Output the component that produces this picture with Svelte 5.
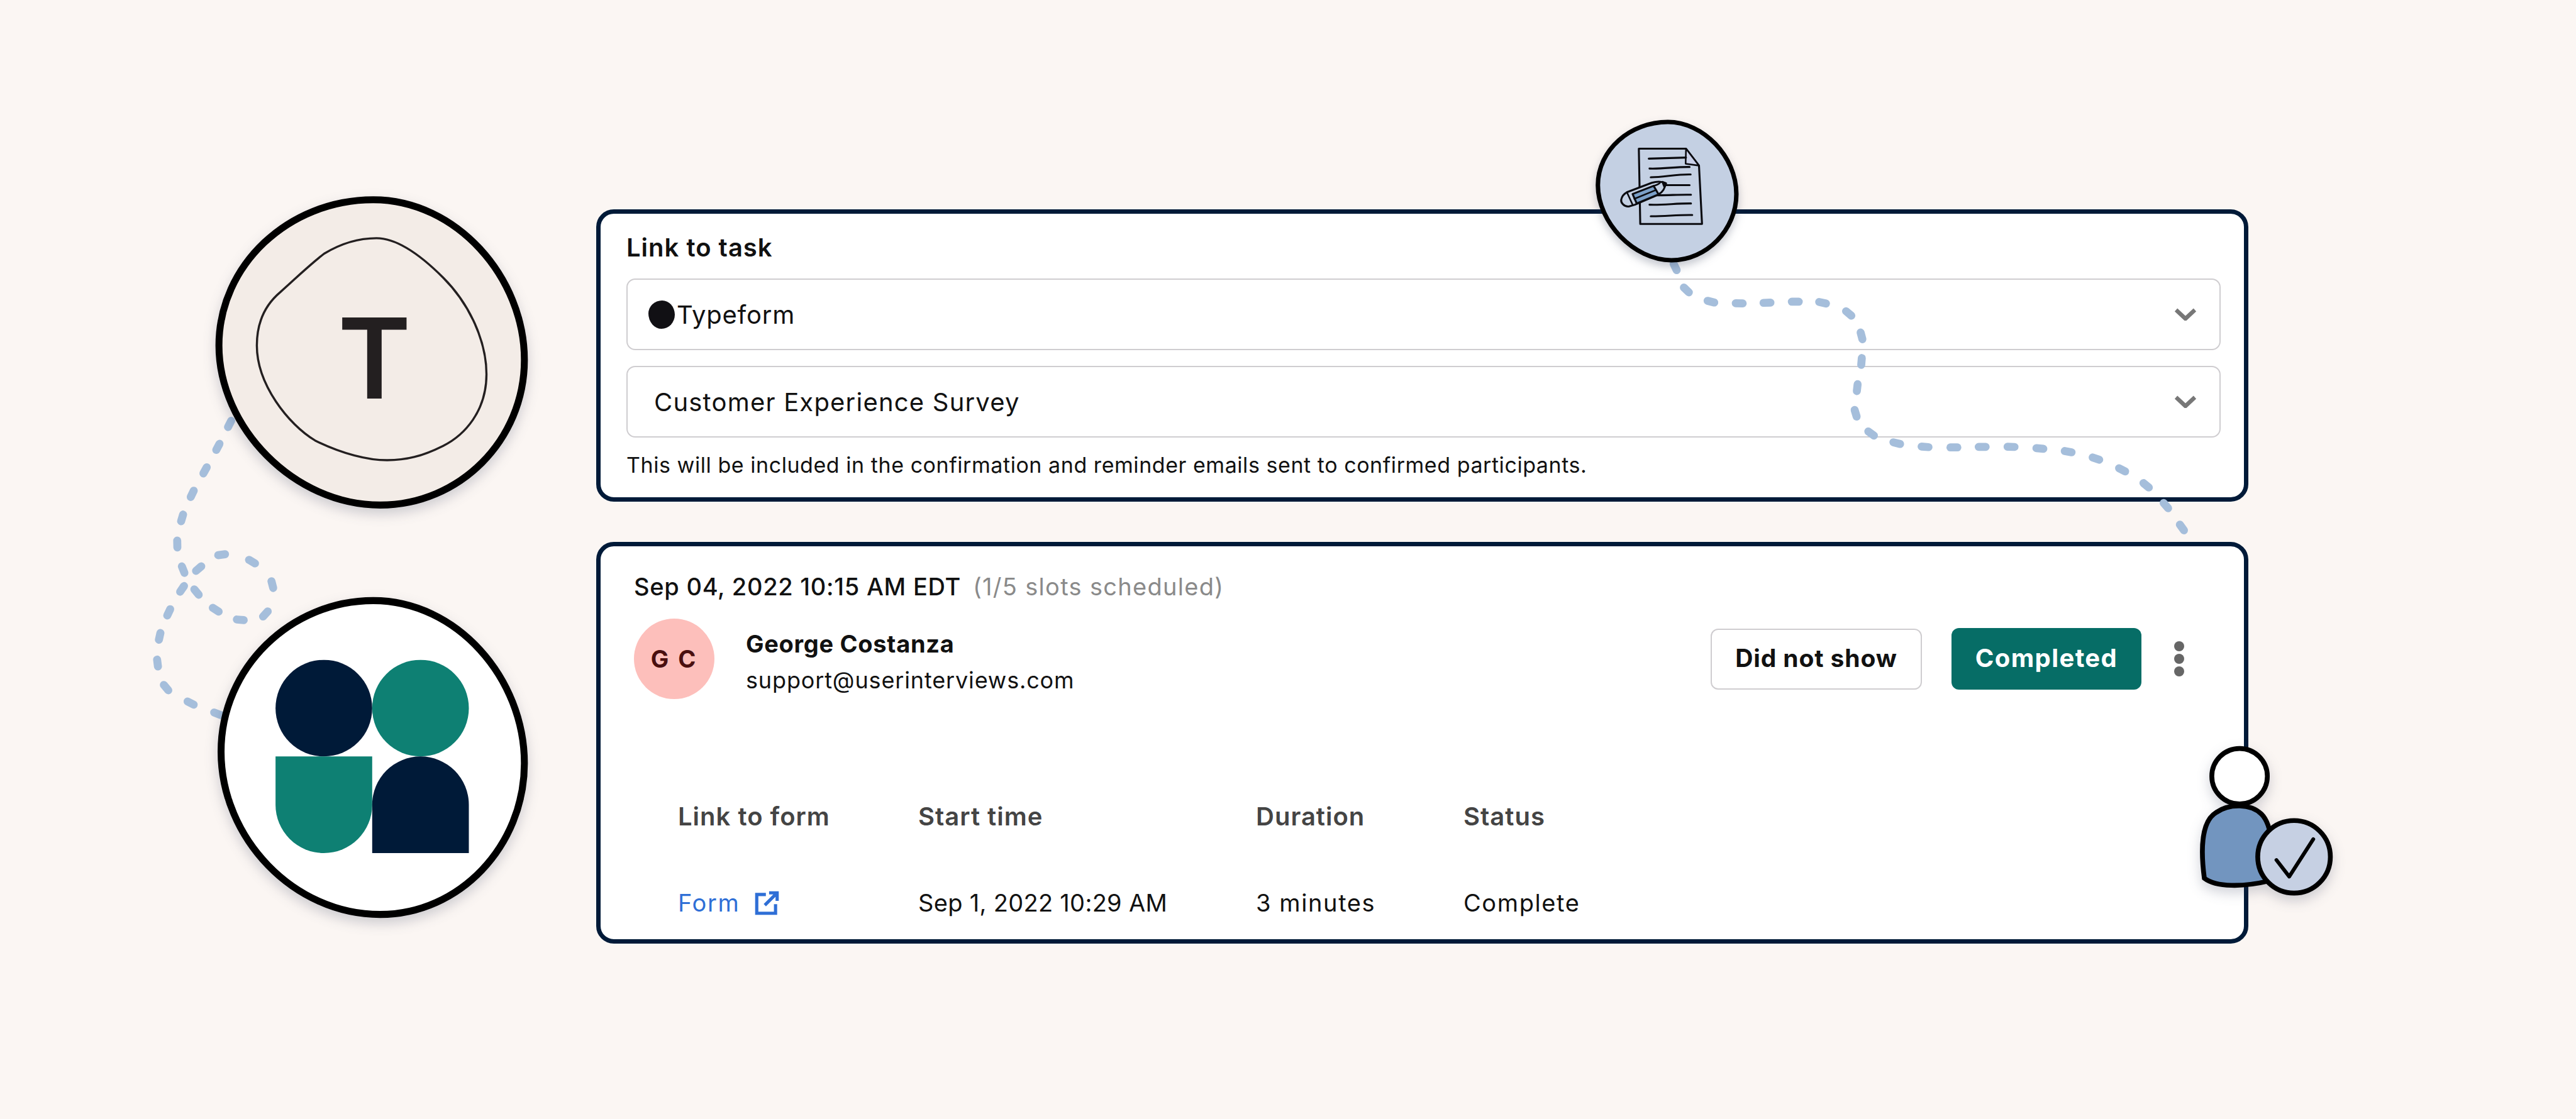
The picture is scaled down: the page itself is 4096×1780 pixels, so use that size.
<script>
  // dash centres of the dotted trails, in reference pixels
  const leftTrail = [
    [430,794],[408,837],[384,881],[360,925],[341,970],[332,1019],[343,1067],[368,1109],
    [404,1142],[450,1161],[497,1150],[510,1095],[472,1052],[415,1039],[372,1065],[341,1103],
    [316,1147],[299,1192],[295,1242],[311,1288],[357,1317],[407,1337]
  ];
  const rightTrail = [
    [3137,500],[3158,543],[3204,565],[3257,568],[3309,567],[3362,565],[3413,567],[3462,587],
    [3486,629],[3486,677],[3478,726],[3475,774],[3504,812],[3552,830],[3605,837],[3659,838],
    [3712,837],[3766,837],[3820,840],[3873,846],[3925,859],[3974,880],[4019,909],[4056,947],[4086,988]
  ];

  function toDashes(points, len = 13) {
    return points.map((p, i) => {
      const a = points[Math.max(i - 1, 0)];
      const b = points[Math.min(i + 1, points.length - 1)];
      const d = Math.hypot(b[0] - a[0], b[1] - a[1]) || 1;
      const dx = ((b[0] - a[0]) / d) * len / 2;
      const dy = ((b[1] - a[1]) / d) * len / 2;
      return { x1: p[0] - dx, y1: p[1] - dy, x2: p[0] + dx, y2: p[1] + dy };
    });
  }

  const dashes = [...toDashes(leftTrail), ...toDashes(rightTrail)];
</script>

<div class="page">
  <section class="card task">
    <div class="label">Link to task</div>
    <div class="select first">
      <span class="blob"></span>
      <span class="typeform">Typeform</span>
      <svg class="chevron" viewBox="0 0 34 20" fill="none" stroke="currentColor" stroke-width="6.5">
        <path d="M2 3 L17 17 L32 3"/>
      </svg>
    </div>
    <div class="select second">
      <span class="survey">Customer Experience Survey</span>
      <svg class="chevron" viewBox="0 0 34 20" fill="none" stroke="currentColor" stroke-width="6.5">
        <path d="M2 3 L17 17 L32 3"/>
      </svg>
    </div>
    <p class="note">This will be included in the confirmation and reminder emails sent to confirmed participants.</p>
  </section>

  <section class="card session">
    <div class="when">Sep 04, 2022 10:15 AM EDT <span class="slots">(1/5 slots scheduled)</span></div>
    <div class="person">
      <div class="avatar">G C</div>
      <div class="who">
        <div class="name">George Costanza</div>
        <div class="email">support@userinterviews.com</div>
      </div>
      <button class="btn ghost">Did not show</button>
      <button class="btn solid">Completed</button>
      <svg class="kebab" viewBox="0 0 16 56" fill="currentColor">
        <circle cx="8" cy="8" r="8"/>
        <circle cx="8" cy="28" r="8"/>
        <circle cx="8" cy="48" r="8"/>
      </svg>
    </div>
    <div class="table">
      <div class="th">Link to form</div>
      <div class="th">Start time</div>
      <div class="th">Duration</div>
      <div class="th">Status</div>
      <div class="td form">
        Form
        <svg viewBox="0 0 24 24" fill="none" stroke="currentColor" stroke-width="3">
          <path d="M11 4 H2.5 V21.5 H20 V13"/>
          <path d="M10 14 L21 3 M14 2.5 H21.5 V10"/>
        </svg>
      </div>
      <div class="td start">Sep 1, 2022 10:29 AM</div>
      <div class="td">3 minutes</div>
      <div class="td">Complete</div>
    </div>
  </section>

  <svg class="canvas" viewBox="0 0 4824 2096">
    <g class="trail">
      {#each dashes as d}
        <line x1={d.x1} y1={d.y1} x2={d.x2} y2={d.y2}/>
      {/each}
    </g>

    <!-- typeform badge -->
    <path class="soft" d="M410 647 C410 497 540 374 699 374 C855 374 982 520 982 674 C982 825 860 946 712 946 C550 946 410 800 410 647 Z" fill="#f3ece7" stroke="#000" stroke-width="13"/>
    <path d="M481 647 C481 600 500 568 525 547 C550 525 575 500 607 475 C640 455 670 446 705 446 C745 446 790 480 830 520 C880 570 911 640 911 701 C911 770 870 815 830 835 C790 855 760 862 725 862 C690 862 640 850 590 825 C540 795 481 720 481 647 Z" fill="none" stroke="#231f20" stroke-width="4"/>
    <text class="tee" x="701" y="746" text-anchor="middle">T</text>

    <!-- user interviews badge -->
    <path class="soft" d="M414 1408 C414 1250 545 1125 699 1125 C855 1125 982 1270 982 1430 C982 1585 860 1713 712 1713 C550 1713 414 1570 414 1408 Z" fill="#fff" stroke="#000" stroke-width="13"/>
    <circle cx="606.5" cy="1326.5" r="90.5" fill="#001a38"/>
    <circle cx="787.5" cy="1326.5" r="90.5" fill="#0e8073"/>
    <path d="M516 1417 H697 V1507.5 A90.5 90.5 0 0 1 516 1507.5 Z" fill="#0e8073"/>
    <path d="M697 1598 V1507.5 A90.5 90.5 0 0 1 878 1507.5 V1598 Z" fill="#001a38"/>

    <!-- document badge, drawn in crop coordinates -->
    <g transform="translate(2950 200) scale(0.3333)">
      <path class="soft-big" d="M127 440 C127 240 310 85 520 85 C720 85 905 280 905 490 C905 690 740 862 540 862 C330 862 127 650 127 440 Z" fill="#c4d0e3" stroke="#000" stroke-width="25"/>
      <g fill="none" stroke="#0b0b10" stroke-width="11" stroke-linecap="round" stroke-linejoin="round">
        <path d="M357 235 H622 L695 330 L712 658 H365 Z"/>
        <path d="M622 235 L620 320 L695 330 Z" fill="#c9d0e8" stroke-width="9"/>
        <path d="M413 291 L622 285"/>
        <path d="M417 347 C490 350 570 336 642 338"/>
        <path d="M424 396 C500 395 570 378 648 380"/>
        <path d="M510 440 H642"/>
        <path d="M460 497 C520 498 590 492 650 494"/>
        <path d="M417 550 C490 553 570 542 650 543"/>
        <path d="M424 615 C500 616 580 606 657 608"/>
        <!-- pencil -->
        <path d="M290 480 L430 427 C460 418 490 420 508 430 C505 455 490 480 468 492 L335 550 L300 560 C275 562 255 540 258 522 C262 500 275 488 290 480 Z" fill="#c4d0e3"/>
        <path d="M322 490 L440 444 L468 492 L345 543 Z" fill="#7ba0c9"/>
        <path d="M332 517 L452 468" stroke-width="9"/>
        <path d="M290 480 L322 550" stroke-width="9"/>
        <path d="M440 444 C455 440 470 436 478 424" stroke-width="9"/>
        <path d="M490 422 L510 430 L500 448 Z" fill="#0b0b10"/>
      </g>
    </g>

    <!-- participant figure -->
    <g class="soft" stroke="#000" stroke-width="9">
      <circle cx="4194" cy="1454" r="52" fill="#fff"/>
      <path d="M4128 1645 C4122 1600 4120 1540 4150 1522 C4175 1505 4215 1505 4235 1525 C4255 1545 4260 1600 4250 1650 C4200 1662 4150 1662 4128 1645 Z" fill="#7295bf"/>
      <circle cx="4296" cy="1605" r="68" fill="#c6d0e3"/>
    </g>
    <path d="M4263 1611 L4287 1642 L4332 1572" fill="none" stroke="#000" stroke-width="7" stroke-linecap="round" stroke-linejoin="round"/>
  </svg>
</div>

<style>
  :global(body) {
    margin: 0;
    background: #fbf6f3;
  }
  .page {
    position: relative;
    box-sizing: border-box;
    width: 4096px;
    height: 1780px;
    overflow: hidden;
    padding: 333px 0 0 948px;
    background: #fbf6f3;
    font-family: Inter, "Liberation Sans", sans-serif;
    color: #111;
  }
  .canvas {
    position: absolute;
    left: 0;
    top: 0;
    width: 100%;
    height: 100%;
    pointer-events: none;
  }
  .trail line {
    stroke: #a5bedb;
    stroke-width: 15;
    stroke-linecap: round;
  }
  .soft { filter: drop-shadow(0 10px 12px rgba(40, 50, 80, 0.22)); }
  .soft-big { filter: drop-shadow(0 24px 24px rgba(40, 50, 80, 0.28)); }
  .tee {
    font-family: Inter, "Liberation Sans", sans-serif;
    font-size: 208px;
    font-weight: 600;
    fill: #231f20;
  }

  .card {
    box-sizing: border-box;
    width: 2627px;
    background: #fff;
    border: 7px solid #001a38;
    border-radius: 28px;
  }
  .task {
    padding: 32px 37px 29px 41px;
    margin-bottom: 64px;
  }
  .label {
    font-size: 40px;
    letter-spacing: 1px;
    line-height: 44px;
    font-weight: 600;
    margin-bottom: 27px;
  }
  .select {
    box-sizing: border-box;
    height: 114px;
    display: flex;
    align-items: center;
    font-size: 40px;
    border: 2.5px solid #cfcdd0;
    border-radius: 14px;
    padding-right: 37px;
  }
  .first { padding-left: 33px; margin-bottom: 25px; }
  .second { padding-left: 42px; }
  .typeform { letter-spacing: 0.75px; }
  .survey { letter-spacing: 1.2px; }
  .blob {
    width: 42px;
    height: 45px;
    margin-right: 3px;
    background: #111014;
    border-radius: 52% 48% 50% 50% / 46% 50% 50% 54%;
  }
  .chevron {
    width: 34px;
    height: 20px;
    margin-left: auto;
    color: #777;
  }
  .note {
    margin: 22px 0 0;
    font-size: 34px;
    letter-spacing: 0.55px;
    line-height: 44px;
  }

  .session {
    height: 639px;
    padding: 40px 95px 34px 53px;
  }
  .when {
    font-size: 38px;
    letter-spacing: 0.73px;
    line-height: 48px;
    font-weight: 500;
  }
  .slots {
    color: #8a8a8a;
    font-weight: 400;
    letter-spacing: 1.3px;
    margin-left: 8px;
  }
  .person {
    display: flex;
    align-items: center;
    margin-top: 27px;
    height: 128px;
  }
  .avatar {
    width: 128px;
    height: 128px;
    border-radius: 50%;
    background: #fdbfbb;
    color: #4a0f0f;
    display: flex;
    align-items: center;
    justify-content: center;
    font-size: 38px;
    font-weight: 700;
    letter-spacing: 3px;
  }
  .who {
    margin-left: 50px;
    padding-top: 10px;
    flex: 1;
  }
  .name {
    font-size: 38px;
    letter-spacing: 0.7px;
    line-height: 48px;
    font-weight: 700;
  }
  .email {
    font-size: 36px;
    letter-spacing: 0.85px;
    line-height: 48px;
    margin-top: 10px;
  }
  .btn {
    font-family: inherit;
    font-weight: 700;
    border-radius: 12px;
    padding: 0 0 3px;
  }
  .ghost {
    width: 336px;
    height: 97px;
    font-size: 39px;
    letter-spacing: 0.9px;
    background: #fff;
    color: #111;
    border: 2.5px solid #cfcdd0;
    margin-right: 47px;
  }
  .solid {
    width: 302px;
    height: 98px;
    font-size: 40px;
    letter-spacing: 1.4px;
    background: #066d66;
    color: #fff;
    border: none;
    margin-right: 52px;
  }
  .kebab {
    width: 16px;
    height: 56px;
    color: #666;
  }
  .table {
    display: grid;
    grid-template-columns: 382px 537px 330px 1fr;
    row-gap: 89px;
    margin-top: 163px;
    padding-left: 70px;
    line-height: 48px;
  }
  .th {
    font-size: 40px;
    letter-spacing: 1px;
    font-weight: 600;
    color: #444;
  }
  .td {
    font-size: 38px;
    letter-spacing: 1.6px;
  }
  .td.start {
    letter-spacing: 0.3px;
  }
  .form {
    color: #2f6fd6;
    display: flex;
    align-items: center;
    gap: 23px;
  }
  .form svg {
    width: 41px;
    height: 41px;
  }
</style>
